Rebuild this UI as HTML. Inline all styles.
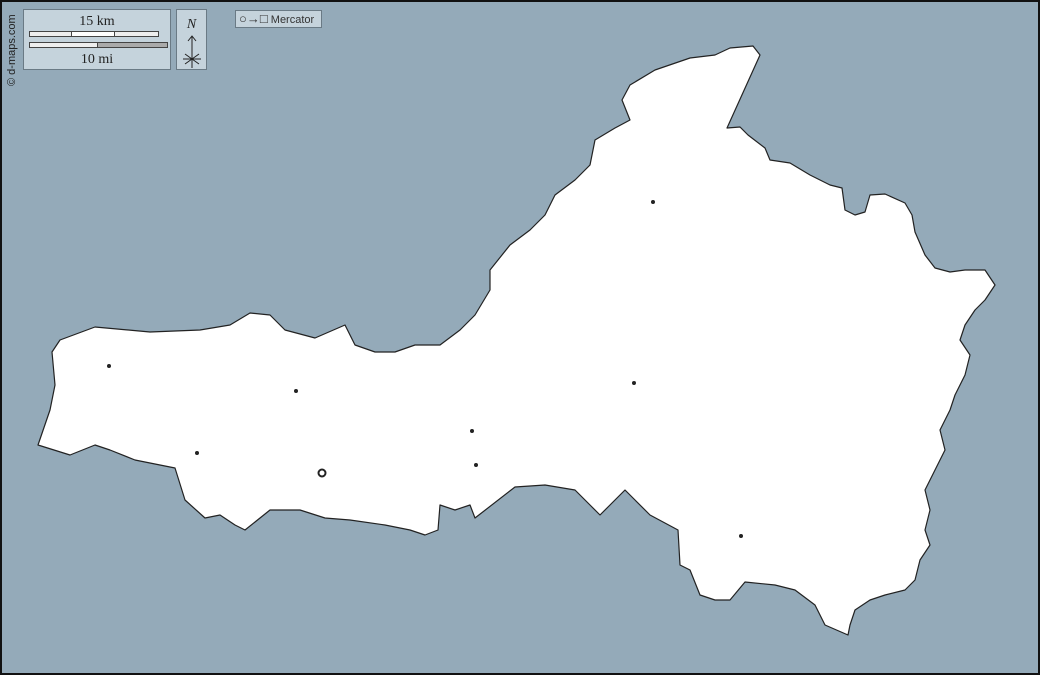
<!DOCTYPE html>
<html><head><meta charset="utf-8"><style>
html,body{margin:0;padding:0;width:1040px;height:675px;overflow:hidden;background:#94aab9}
.box{position:absolute;background:#c8d6df;border:1px solid #6a7a85;box-sizing:border-box}
.t{font-family:"Liberation Serif",serif;font-size:14px;color:#222;position:absolute;width:100%;text-align:center}
</style></head><body>
<svg width="1040" height="675" style="position:absolute;left:0;top:0">
<rect x="1" y="1" width="1038" height="673" fill="#94aab9" stroke="#111" stroke-width="2"/>
<polygon fill="#fff" stroke="#222" stroke-width="1.2" stroke-linejoin="round" points="730,48 753,46 760,55 727,128 740,127 748,135 765,148 770,160 790,163 810,175 830,185 842,188 845,210 855,215 865,212 870,195 885,194 905,203 912,215 915,232 925,255 935,268 950,272 965,270 985,270 995,285 985,300 975,310 965,325 960,340 970,355 965,375 955,395 950,410 940,430 945,450 935,470 925,490 930,510 925,530 930,545 920,560 915,580 905,590 885,595 870,600 855,610 850,625 848,635 825,625 815,605 795,590 775,585 745,582 730,600 715,600 700,595 690,570 680,565 678,530 650,515 635,500 625,490 610,505 600,515 590,505 575,490 545,485 515,487 475,518 470,505 455,510 440,505 438,530 425,535 410,530 385,525 350,520 325,518 300,510 270,510 245,530 235,525 220,515 205,518 185,500 175,468 135,460 110,450 95,445 70,455 38,445 50,410 55,385 52,352 60,340 95,327 150,332 200,330 230,325 250,313 270,315 285,330 315,338 345,325 355,345 375,352 395,352 415,345 440,345 460,330 475,315 490,290 490,270 510,245 530,230 545,215 555,195 575,180 590,165 595,140 615,128 630,120 622,100 630,85 655,70 690,58 715,55"/>
<g fill="#222"><circle cx="109" cy="366" r="2"/><circle cx="296" cy="391" r="2"/><circle cx="197" cy="453" r="2"/><circle cx="472" cy="431" r="2"/><circle cx="476" cy="465" r="2"/><circle cx="634" cy="383" r="2"/><circle cx="653" cy="202" r="2"/><circle cx="741" cy="536" r="2"/></g>
<circle cx="322" cy="473" r="3.5" fill="#fff" stroke="#222" stroke-width="2"/>
<text x="15" y="86" transform="rotate(-90 15 86)" font-family="Liberation Sans,sans-serif" font-size="11" fill="#222">© d-maps.com</text>
</svg>
<div class="box" style="left:23px;top:9px;width:148px;height:61px;background:#c5d3dc">
<div class="t" style="top:4px">15 km</div>
<div style="position:absolute;left:5px;top:21px;width:128px;height:4px;border:1px solid #444;background:#eee"></div>
<div style="position:absolute;left:47px;top:21px;width:42px;height:4px;border:1px solid #444;background:#fff"></div>
<div style="position:absolute;left:5px;top:32px;width:137px;height:4px;border:1px solid #444;background:#eee"></div>
<div style="position:absolute;left:73px;top:32px;width:69px;height:4px;border:1px solid #444;background:#aaa"></div>
<div class="t" style="top:42px">10 mi</div>
</div>
<div class="box" style="left:176px;top:9px;width:31px;height:61px;background:#c5d3dc">
<div class="t" style="top:7px;font-style:italic">N</div>
<svg width="31" height="61" style="position:absolute;left:0;top:0"><path d="M15 26V58M11 31L15 26L19 31M8 44L22 54M22 44L8 54M6 49H24" stroke="#222" fill="none" stroke-width="1"/></svg>
</div>
<div class="box" style="left:235px;top:10px;width:87px;height:18px;font-family:'Liberation Sans',sans-serif;font-size:11px;color:#333;line-height:16px;padding-left:3px;background:#c5d3dc;white-space:nowrap"><span style="font-size:13px">○→□</span> Mercator</div>
</body></html>
